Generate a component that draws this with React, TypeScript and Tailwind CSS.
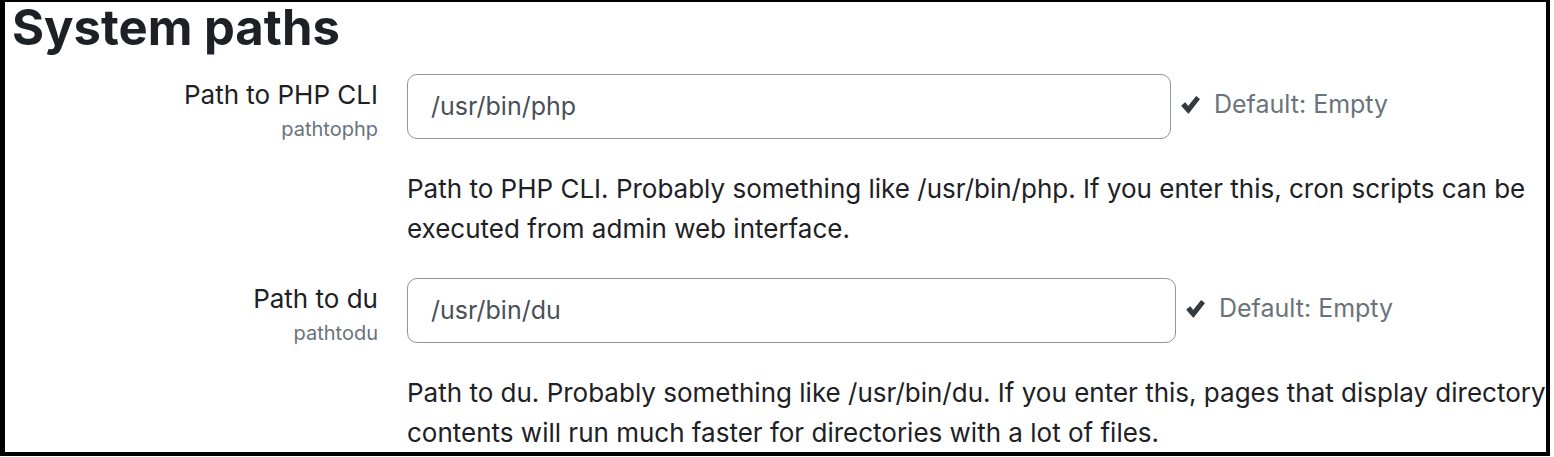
import React from "react";

function Check() {
  return (
    <svg width="19" height="18" viewBox="0 0 19 18" className="shrink-0">
      <path d="M1 9.8 L4.2 7 L7.2 10.9 L15.2 0.8 L18.2 3.2 L7.5 17 Z" fill="#343a40" stroke="#343a40" strokeWidth="1.2" strokeLinejoin="round" />
    </svg>
  );
}

function Row({
  label,
  name,
  value,
  inputWidth,
  desc,
}: {
  label: string;
  name: string;
  value: string;
  inputWidth: string;
  desc: string;
}) {
  return (
    <div className="flex">
      <div className="w-[373px] shrink-0 flex flex-col items-end pt-[6px]">
        <div className="text-[26px] leading-[30px] text-[#1d2125]">{label}</div>
        <div className="text-[20px] leading-[24px] text-[#6a737b] mt-[7px]">{name}</div>
      </div>
      <div className="ml-[29px] flex flex-col">
        <div className="flex items-center">
          <div
            className={`${inputWidth} h-[65px] rounded-[10px] border border-[#8f959e] flex items-center pl-[23px] text-[25px] text-[#495057]`}
          >
            {value}
          </div>
          <div className="flex items-center ml-[10px] gap-[14px] text-[25px] text-[#6a737b] -mt-[3px]">
            <Check />
            <span>Default: Empty</span>
          </div>
        </div>
        <div className="mt-[30px] text-[26px] leading-[40px] text-[#1d2125] w-[1140px]">{desc}</div>
      </div>
    </div>
  );
}

export default function App() {
  return (
    <div className="w-[1554px] h-[457px] bg-white" style={{ fontFamily: "Inter, 'Noto Sans', sans-serif" }}>
      <div className="w-[1550px] h-[456px] border-l-[5px] border-t-[2px] border-r-[4px] border-b-[4px] border-black">
        <h2 className="pl-[7px] text-[49px] leading-[52px] font-bold text-[#1d2125]">System paths</h2>
        <div className="mt-[20px] flex flex-col gap-[29px]">
          <Row
            label="Path to PHP CLI"
            name="pathtophp"
            value="/usr/bin/php"
            inputWidth="w-[764px]"
            desc="Path to PHP CLI. Probably something like /usr/bin/php. If you enter this, cron scripts can be executed from admin web interface."
          />
          <Row
            label="Path to du"
            name="pathtodu"
            value="/usr/bin/du"
            inputWidth="w-[769px]"
            desc="Path to du. Probably something like /usr/bin/du. If you enter this, pages that display directory contents will run much faster for directories with a lot of files."
          />
        </div>
      </div>
    </div>
  );
}
